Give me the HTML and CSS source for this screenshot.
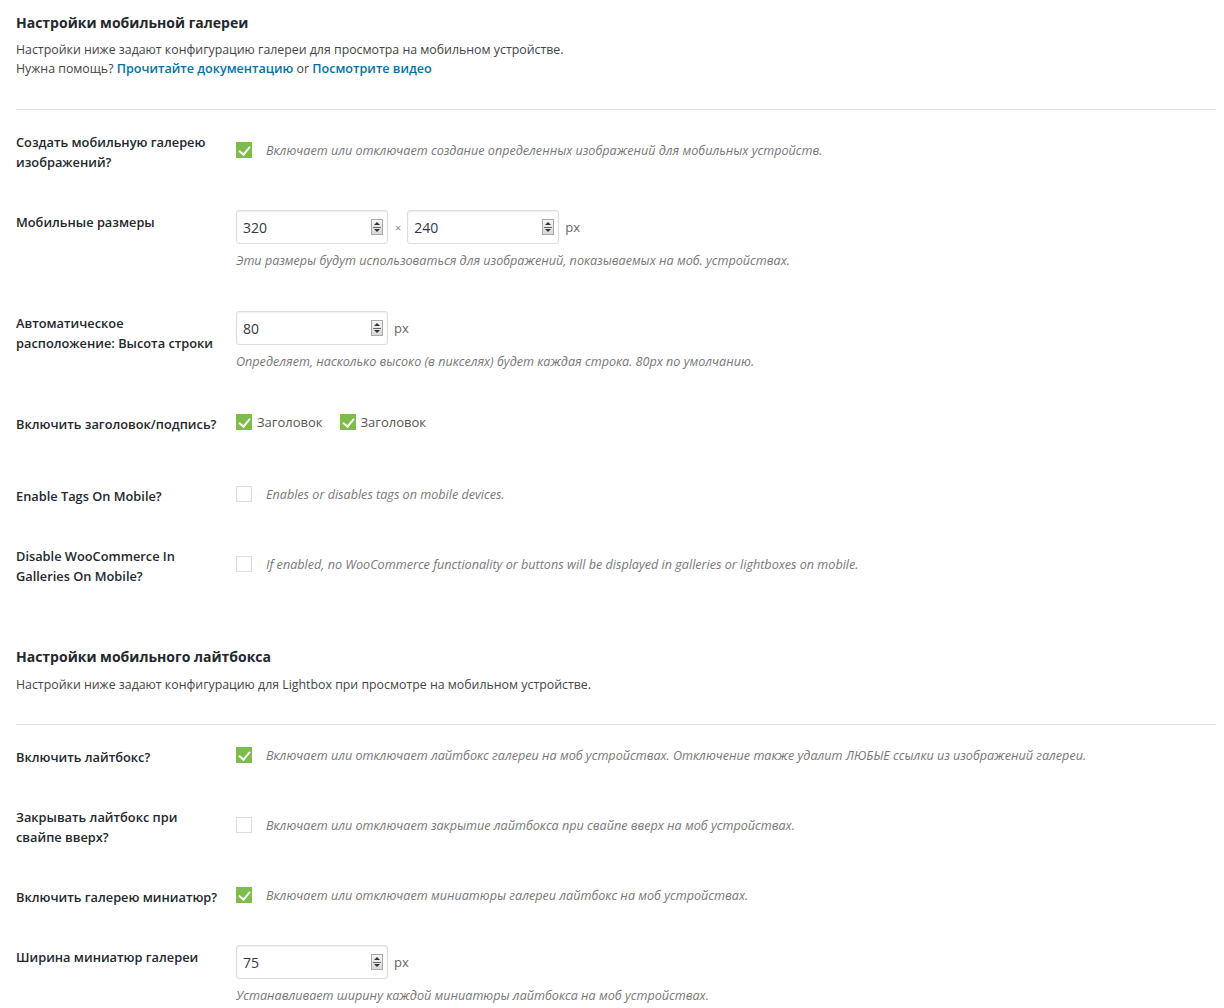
FILE: index.html
```html
<!DOCTYPE html>
<html lang="ru">
<head>
<meta charset="utf-8">
<title>Настройки мобильной галереи</title>
<link rel="stylesheet" href="styles.css">
</head>
<body>
<div class="page">

  <section class="section">
    <h2 class="sec-title">Настройки мобильной галереи</h2>
    <p class="sec-desc">Настройки ниже задают конфигурацию галереи для просмотра на мобильном устройстве.<br>
      Нужна помощь? <a href="#" class="link">Прочитайте документацию</a> or <a href="#" class="link">Посмотрите видео</a></p>
    <hr class="sep">

    <div class="form">
      <div class="row">
        <div class="th">Создать мобильную галерею изображений?</div>
        <div class="td">
          <div class="check-line"><span class="cb on"></span><span class="desc">Включает или отключает создание определенных изображений для мобильных устройств.</span></div>
        </div>
      </div>

      <div class="row">
        <div class="th">Мобильные размеры</div>
        <div class="td">
          <div class="inputs">
            <div class="numbox"><span class="val">320</span><span class="spin"></span></div>
            <span class="times">×</span>
            <div class="numbox"><span class="val">240</span><span class="spin"></span></div>
            <span class="unit">px</span>
          </div>
          <p class="desc block">Эти размеры будут использоваться для изображений, показываемых на моб. устройствах.</p>
        </div>
      </div>

      <div class="row">
        <div class="th">Автоматическое расположение: Высота строки</div>
        <div class="td">
          <div class="inputs">
            <div class="numbox"><span class="val">80</span><span class="spin"></span></div>
            <span class="unit">px</span>
          </div>
          <p class="desc block">Определяет, насколько высоко (в пикселях) будет каждая строка. 80px по умолчанию.</p>
        </div>
      </div>

      <div class="row">
        <div class="th">Включить заголовок/подпись?</div>
        <div class="td td-top">
          <div class="check-line">
            <label class="opt"><span class="cb on"></span>Заголовок</label>
            <label class="opt"><span class="cb on"></span>Заголовок</label>
          </div>
          <div class="spacer"></div>
        </div>
      </div>

      <div class="row">
        <div class="th">Enable Tags On Mobile?</div>
        <div class="td">
          <div class="check-line"><span class="cb"></span><span class="desc">Enables or disables tags on mobile devices.</span></div>
        </div>
      </div>

      <div class="row">
        <div class="th">Disable WooCommerce In Galleries On Mobile?</div>
        <div class="td">
          <div class="check-line"><span class="cb"></span><span class="desc">If enabled, no WooCommerce functionality or buttons will be displayed in galleries or lightboxes on mobile.</span></div>
        </div>
      </div>
    </div>
  </section>

  <section class="section second">
    <h2 class="sec-title">Настройки мобильного лайтбокса</h2>
    <p class="sec-desc">Настройки ниже задают конфигурацию для Lightbox при просмотре на мобильном устройстве.</p>
    <hr class="sep">

    <div class="form">
      <div class="row">
        <div class="th">Включить лайтбокс?</div>
        <div class="td">
          <div class="check-line"><span class="cb on"></span><span class="desc">Включает или отключает лайтбокс галереи на моб устройствах. Отключение также удалит ЛЮБЫЕ ссылки из изображений галереи.</span></div>
        </div>
      </div>

      <div class="row">
        <div class="th">Закрывать лайтбокс при свайпе вверх?</div>
        <div class="td">
          <div class="check-line"><span class="cb"></span><span class="desc">Включает или отключает закрытие лайтбокса при свайпе вверх на моб устройствах.</span></div>
        </div>
      </div>

      <div class="row">
        <div class="th">Включить галерею миниатюр?</div>
        <div class="td">
          <div class="check-line"><span class="cb on"></span><span class="desc">Включает или отключает миниатюры галереи лайтбокс на моб устройствах.</span></div>
        </div>
      </div>

      <div class="row">
        <div class="th">Ширина миниатюр галереи</div>
        <div class="td">
          <div class="inputs">
            <div class="numbox"><span class="val">75</span><span class="spin"></span></div>
            <span class="unit">px</span>
          </div>
          <p class="desc block">Устанавливает ширину каждой миниатюры лайтбокса на моб устройствах.</p>
        </div>
      </div>
    </div>
  </section>

</div>
</body>
</html>
```

FILE: styles.css
```css
* { box-sizing: border-box; }

html, body {
  margin: 0;
  padding: 0;
  background: #fff;
}

body {
  font-family: "Open Sans", "Noto Sans", "Liberation Sans", sans-serif;
  font-size: 12px;
  color: #23282d;
}

.page {
  width: 1216px;
  padding: 0 0 0 16px;
}

.sec-title {
  margin: 13px 0 0;
  font-size: 14px;
  line-height: 20px;
  font-weight: 700;
  color: #23282d;
}

.second .sec-title {
  margin-top: 43px;
}

.sec-desc {
  margin: 7px 0 0;
  font-size: 12.35px;
  line-height: 19px;
  color: #444;
}

.second .sec-desc {
  margin-top: 8px;
}

.link {
  color: #0073aa;
  text-decoration: none;
  font-weight: 600;
  font-size: 12.6px;
}

.sep {
  margin: 31px 0 0;
  border: 0;
  border-top: 1px solid #e1e1e1;
  height: 0;
}

.second .sep {
  margin-top: 30px;
}

.row {
  display: flex;
}

.th {
  flex: 0 0 220px;
  padding: 22px 15px 18px 0;
  font-size: 12.8px;
  font-weight: 600;
  line-height: 20px;
  color: #23282d;
}

.td {
  flex: 1;
  padding: 20px 0;
  align-self: center;
}

.td-top {
  align-self: flex-start;
}

.spacer {
  height: 12px;
}

.check-line {
  display: flex;
  align-items: center;
  height: 20px;
}

.cb {
  flex: 0 0 16px;
  width: 16px;
  height: 16px;
  border: 1px solid #ddd;
  background: #fff;
  margin-right: 14px;
  position: relative;
}

.cb.on {
  border-color: #7cbd4b;
  background: #7cbd4b;
}

.cb.on::after {
  content: "";
  position: absolute;
  left: 4px;
  top: 1px;
  width: 5px;
  height: 9px;
  border: solid #fff;
  border-width: 0 2.5px 2.5px 0;
  transform: rotate(40deg);
}

.desc {
  font-style: italic;
  font-size: 12.6px;
  color: #777;
}

.desc.block {
  margin: 7px 0 0;
  line-height: 20px;
}

.opt {
  display: flex;
  align-items: center;
  font-size: 13px;
  color: #555;
  margin-right: 17px;
}

.opt .cb {
  margin-right: 5px;
}

.inputs {
  display: flex;
  align-items: center;
  height: 34px;
}

.numbox {
  width: 152px;
  height: 34px;
  border: 1px solid #ddd;
  border-radius: 3px;
  box-shadow: inset 0 1px 2px rgba(0,0,0,0.07);
  display: flex;
  align-items: center;
  padding: 0 4px 0 6px;
}

.val {
  flex: 1;
  font-size: 14px;
  color: #32373c;
}

.spin {
  width: 12px;
  height: 16px;
  border: 1px solid #a9a9a9;
  background:
    linear-gradient(#666, #666) center 7px / 8px 1px no-repeat,
    linear-gradient(#f5f5f5, #d8d8d8);
  position: relative;
}

.spin::before,
.spin::after {
  content: "";
  position: absolute;
  left: 2px;
  border-left: 3px solid transparent;
  border-right: 3px solid transparent;
}

.spin::before {
  top: 2px;
  border-bottom: 3px solid #333;
}

.spin::after {
  bottom: 2px;
  border-top: 3px solid #333;
}

.times {
  margin: 0 6px 0 7px;
  font-size: 11px;
  color: #888;
}

.unit {
  margin-left: 6px;
  font-size: 13px;
  color: #666;
}
```
